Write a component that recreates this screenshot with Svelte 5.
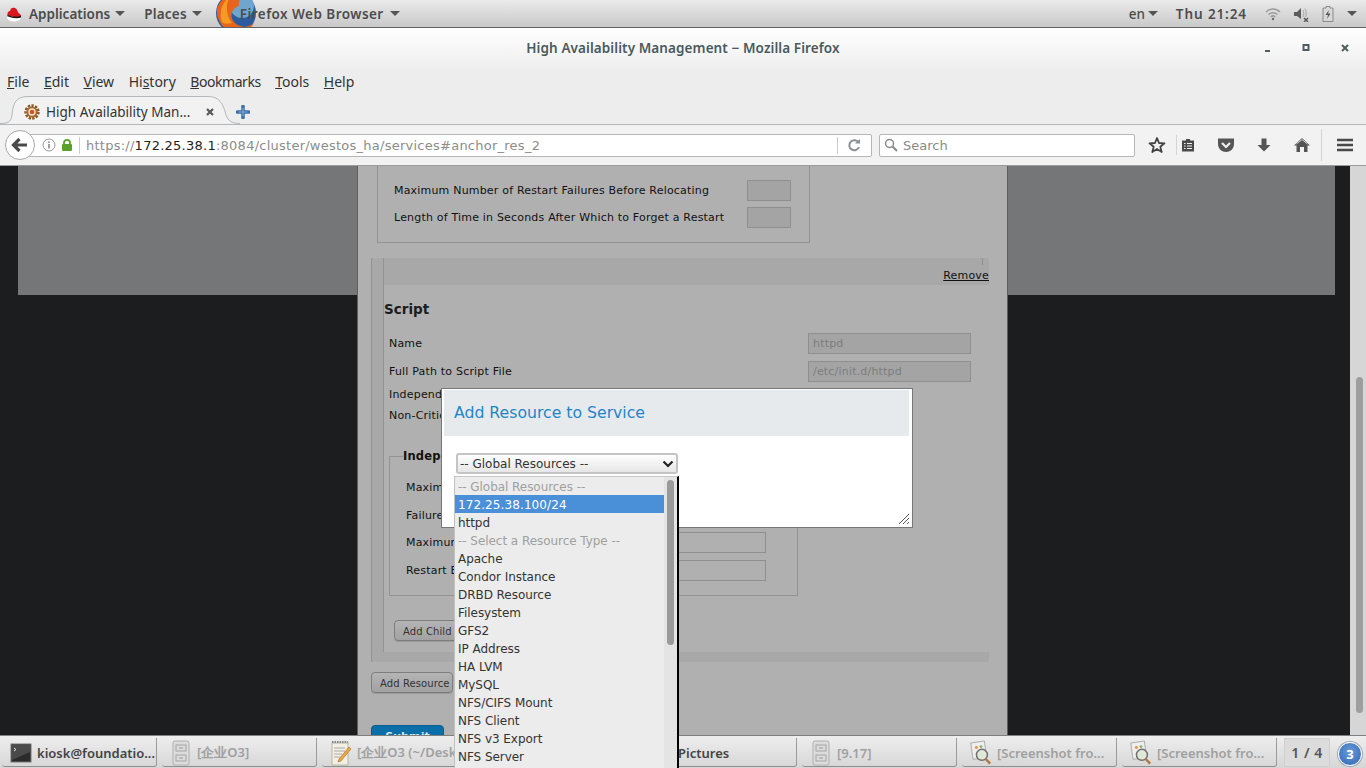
<script>
  const menus = [['','F','ile'],['','E','dit'],['','V','iew'],['Hi','s','tory'],['','B','ookmarks'],['','T','ools'],['','H','elp']];
  const options = [
    {t:'-- Global Resources --',d:true},{t:'172.25.38.100/24',s:true},{t:'httpd'},{t:'-- Select a Resource Type --',d:true},
    {t:'Apache'},{t:'Condor Instance'},{t:'DRBD Resource'},{t:'Filesystem'},{t:'GFS2'},{t:'IP Address'},{t:'HA LVM'},{t:'MySQL'},
    {t:'NFS/CIFS Mount'},{t:'NFS Client'},{t:'NFS v3 Export'},{t:'NFS Server'}
  ];
  const tasks = [
    {t:'kiosk@foundatio...',i:'term',a:true},{t:'[企业O3]',i:'cab'},{t:'[企业O3 (~/Desktop)',i:'note'},{t:'',i:''},
    {t:'Pictures',i:'',a:true,p:true},{t:'[9.17]',i:'cab'},{t:'[Screenshot fro...',i:'shot'},{t:'[Screenshot fro...',i:'shot'}
  ];
</script>

<div class="app">
  <header class="top">
    <svg class="rh" viewBox="0 0 16 16" width="16" height="16"><ellipse cx="8" cy="11" rx="7" ry="4.5" fill="#fff"/><path d="M1.5 9.5 C1 6 3 5 4 5 L5 2.5 C6.5 1.5 9 1.5 10.5 3 L12.5 7 C14 8 15.5 9 15 10.5 C13 12.5 9 11.5 6 10.5 C4 10 2.5 9.5 1.5 9.5Z" fill="#d8171e"/><path d="M1.5 9.5 C4 10.5 10 13 15 10.5" fill="none" stroke="#111" stroke-width="1.4"/></svg>
    <span class="tl app-l">Applications</span><i class="tri t1"></i>
    <span class="tl pl">Places</span><i class="tri t2"></i>
    <span class="ffwrap">
      <svg class="ff" viewBox="0 0 42 42" width="42" height="42"><circle cx="22" cy="21" r="20" fill="#2d5c9e"/><circle cx="28" cy="14" r="12" fill="#6fa6cf"/><path d="M3 17 C2 30 12 41 23 41 C31 41 37 37 40 31 C34 36 25 36 20 30 C15 24 18 16 25 14 C24 8 28 4 31 3 C22 -1 8 2 3 17Z" fill="#e8641b"/><path d="M8 30 C5 22 7 10 16 5 C12 11 11 22 18 31 C13 32 10 32 8 30Z" fill="#f59a23"/></svg>
      <span class="tl ffl">Firefox Web Browser</span>
    </span><i class="tri t3"></i>
    <span class="spacer"></span>
    <span class="tl en">en</span><i class="tri t4"></i>
    <span class="tl clock">Thu 21:24</span>
    <svg class="ic-wifi" viewBox="0 0 16 16" width="16" height="16" fill="none" stroke="#9c9c9c" stroke-width="1.5"><path d="M1 6 C5 2 11 2 15 6"/><path d="M3.5 8.5 C6 6 10 6 12.5 8.5"/><path d="M5.8 10.8 C7 9.8 9 9.8 10.2 10.8"/><circle cx="8" cy="13" r="1.2" fill="#6a6a6a" stroke="none"/></svg>
    <svg class="ic-vol" viewBox="0 0 16 16" width="16" height="16"><path d="M1 6 H4 L8 2 V13 L4 10 H1Z" fill="#5c5c5c"/><path d="M10 4 C11 6 11 9 10 11 M12 2.5 C13.5 5 13.5 9 12.5 11" fill="none" stroke="#aaa" stroke-width="1"/><path d="M11 12 L15 16 M15 12 L11 16" stroke="#555" stroke-width="1.4"/></svg>
    <svg class="ic-bat" viewBox="0 0 12 16" width="12" height="16"><path d="M4 .5 H8 V2 H11 V15.5 H1 V2 H4Z" fill="#d8d8d8" stroke="#8a8a8a"/><path d="M7 4 L3.5 9 H6 L5 13 L8.5 7.5 H6Z" fill="#555"/></svg>
    <i class="tri t5"></i>
  </header>

  <section class="win">
    <div class="title">
      <span class="title-t">High Availability Management − Mozilla Firefox</span>
      <div class="wbtns">
        <svg viewBox="0 0 10 10" width="10" height="10"><rect x="3" y="7" width="5" height="2" fill="#4f5d63"/></svg>
        <svg viewBox="0 0 10 10" width="10" height="10"><rect x="2.5" y="2" width="5" height="5" fill="none" stroke="#4f5d63" stroke-width="2"/></svg>
        <svg viewBox="0 0 10 10" width="10" height="10"><path d="M2 2 L8 8 M8 2 L2 8" stroke="#4f5d63" stroke-width="2"/></svg>
      </div>
    </div>
    <nav class="menu">
      {#each menus as m}<span>{m[0]}<u>{m[1]}</u>{m[2]}</span>{/each}
    </nav>
    <div class="tabs">
      <div class="tab">
        <svg class="tab-shape" viewBox="0 0 240 30" width="240" height="30"><path d="M0 28.5 C8 28.5 11 27 12 20 C13 8 16 1.5 28 1.5 H208 C219 1.5 223 8 226 20 C228 26 232 28.5 240 28.5" fill="#f2f2f2" stroke="#b4b8bb"/></svg>
        <svg class="fav" viewBox="0 0 16 16" width="16" height="16"><rect width="16" height="16" fill="#f7f5f1"/><circle cx="8" cy="8" r="6.4" fill="none" stroke="#8a5a2c" stroke-width="2.6" stroke-dasharray="2.4 1.2"/><circle cx="8" cy="8" r="4.6" fill="#f1e6d8" stroke="#a5672e" stroke-width="1.8"/><circle cx="8" cy="8" r="2.3" fill="#d8501c"/></svg>
        <span class="tab-t">High Availability Man...</span>
        <svg class="tab-x" viewBox="0 0 10 10" width="10" height="10"><path d="M2 2 L8 8 M8 2 L2 8" stroke="#55595c" stroke-width="2.2"/></svg>
      </div>
      <svg class="plus" viewBox="0 0 14 14" width="14" height="14"><path d="M7 1.5 V12.5 M1.5 7 H12.5" stroke="#3a6ea8" stroke-width="3.6" stroke-linecap="round"/><path d="M7 2.5 V11.5 M2.5 7 H11.5" stroke="#7ba7d6" stroke-width="1.2"/></svg>
    </div>
    <div class="nav">
      <div class="back"><svg viewBox="0 0 18 18" width="18" height="18"><path d="M8.5 3 L2.5 9 L8.5 15 M3 9 H16" fill="none" stroke="#4a4a4a" stroke-width="3.2"/></svg></div>
      <div class="url">
        <svg class="info" viewBox="0 0 14 14" width="14" height="14"><circle cx="7" cy="7" r="6" fill="none" stroke="#9a9a9a"/><rect x="6.2" y="6" width="1.6" height="4.5" fill="#8a8a8a"/><rect x="6.2" y="3.4" width="1.6" height="1.6" fill="#8a8a8a"/></svg>
        <svg class="lock" viewBox="0 0 12 14" width="12" height="14"><path d="M3 6 V4.5 C3 1 9 1 9 4.5 V6" fill="none" stroke="#5aa02c" stroke-width="1.8"/><rect x="1" y="6" width="10" height="7" rx="1" fill="#5aa02c"/></svg>
        <span class="vsep"></span>
        <span class="url-t">https://<b>172.25.38.1</b>:8084/cluster/westos_ha/services#anchor_res_2</span>
        <span class="vsep r"></span>
        <svg class="reload" viewBox="0 0 14 14" width="14" height="14"><path d="M11.5 4.5 A5 5 0 1 0 12 9" fill="none" stroke="#8a9096" stroke-width="2"/><path d="M8 5.5 H13 V1Z" fill="#8a9096"/></svg>
      </div>
      <div class="search">
        <svg viewBox="0 0 14 14" width="14" height="14"><circle cx="5.5" cy="5.5" r="4" fill="none" stroke="#8a8a8a" stroke-width="1.5"/><path d="M8.5 8.5 L13 13" stroke="#8a8a8a" stroke-width="2"/></svg>
        <span>Search</span>
      </div>
      <div class="tools">
        <svg class="i-star" viewBox="0 0 18 18" width="18" height="18"><path d="M9 2 L11 7 L16.5 7.3 L12.3 10.8 L13.7 16 L9 13.1 L4.3 16 L5.7 10.8 L1.5 7.3 L7 7Z" fill="none" stroke="#444" stroke-width="1.8" stroke-linejoin="round"/></svg>
        <span class="tsep a"></span>
        <svg class="i-clip" viewBox="0 0 16 16" width="16" height="16"><path d="M6 2 H10 V3.5 H14 V14.5 H2 V3.5 H6Z" fill="#4a4a4a"/><path d="M4 6.5 H5.5 M7 6.5 H12 M4 9 H5.5 M7 9 H12 M4 11.5 H5.5 M7 11.5 H12" stroke="#f2f2f2" stroke-width="1.2"/></svg>
        <svg class="i-pock" viewBox="0 0 18 16" width="18" height="16"><path d="M1 1.5 H17 V7 C17 12 13 15 9 15 C5 15 1 12 1 7Z" fill="#555"/><path d="M5 6 L9 10 L13 6" fill="none" stroke="#eee" stroke-width="2.2"/></svg>
        <svg class="i-down" viewBox="0 0 16 16" width="16" height="16"><path d="M5.5 1.5 H10.5 V8 H14.5 L8 14.5 L1.5 8 H5.5Z" fill="#555"/></svg>
        <svg class="i-home" viewBox="0 0 18 16" width="18" height="16"><path d="M9 1 L17 8.5 H14.5 V15 H11 V10 H7 V15 H3.5 V8.5 H1Z" fill="#555"/><path d="M3.5 7 L9 2.5 L14.5 7" fill="none" stroke="#f2f2f2" stroke-width=".8"/></svg>
        <span class="tsep b"></span>
        <svg class="i-menu" viewBox="0 0 16 14" width="16" height="14"><path d="M0 2 H16 M0 7 H16 M0 12 H16" stroke="#4a4a4a" stroke-width="2.4"/></svg>
      </div>
    </div>
  </section>

  <main class="content">
    <div class="view">
      <div class="band"></div>
      <div class="panel">
        <div class="restart">
          <div class="rrow"><span>Maximum Number of Restart Failures Before Relocating</span><span class="inp small"></span></div>
          <div class="rrow"><span>Length of Time in Seconds After Which to Forget a Restart</span><span class="inp small"></span></div>
        </div>
        <div class="res">
          <div class="res-in">
            <div class="res-head"><i class="tick"></i><a>Remove</a></div>
            <h3>Script</h3>
            <div class="frow one"><span>Name</span><span class="inp wide">httpd</span></div>
            <div class="frow two"><span>Full Path to Script File</span><span class="inp wide">/etc/init.d/httpd</span></div>
            <div class="lbl three">Independent Subtree</div>
            <div class="lbl four">Non-Critical Resource</div>
            <fieldset>
              <legend>Independent Subtree</legend>
              <div class="frow f1"><span>Maximum Number of Restarts</span></div>
              <div class="frow f2"><span>Failure Expire Time</span></div>
              <div class="frow f3"><span>Maximum Restarts</span><span class="inp fin"></span></div>
              <div class="frow f4"><span>Restart Expire Time</span><span class="inp fin"></span></div>
            </fieldset>
            <button class="child">Add Child Resource</button>
          </div>
        </div>
        <button class="addres">Add Resource</button>
        <button class="submit">Submit</button>
      </div>
    </div>
    <div class="scroll"><i></i></div>
  </main>

  <footer class="task">
    {#each tasks as t}
      <div class="tb" class:active={t.a}>
        {#if t.i==='term'}
          <svg viewBox="0 0 22 22" width="22" height="22"><rect x="1" y="2" width="20" height="18" fill="#2b2b2b" stroke="#777"/><path d="M2 3 H20 V10 L2 18Z" fill="#4a4a4a"/><path d="M4 6 L6 7.5 L4 9" fill="none" stroke="#ddd"/></svg>
        {:else if t.i==='cab'}
          <svg viewBox="0 0 22 26" width="22" height="26"><rect x="3" y="1" width="16" height="24" rx="2" fill="#dcdcdc" stroke="#b0b0b0"/><rect x="6" y="5" width="10" height="6" fill="none" stroke="#a4a4a4"/><rect x="6" y="15" width="10" height="6" fill="none" stroke="#a4a4a4"/><path d="M9 8 H13 M9 18 H13" stroke="#999"/></svg>
        {:else if t.i==='note'}
          <svg viewBox="0 0 22 26" width="22" height="26"><rect x="2" y="3" width="16" height="22" fill="#f3efe2" stroke="#b5b5a5"/><path d="M2 2 H18" stroke="#888" stroke-width="2" stroke-dasharray="1.5 1"/><path d="M4 8 H15 M4 11 H15 M4 14 H12 M4 17 H10" stroke="#aaa"/><path d="M19 7 L21 9 L11 21 L8 22 L9 19Z" fill="#e8a84a" stroke="#a86c2a" stroke-width=".6"/></svg>
        {:else if t.i==='shot'}
          <svg viewBox="0 0 24 26" width="22" height="26"><rect x="2" y="1" width="15" height="18" fill="#eee" stroke="#aaa" transform="rotate(-8 9 10)"/><circle cx="7" cy="7" r="1.8" fill="#e0a060"/><circle cx="12" cy="6" r="1.5" fill="#7fae6a"/><circle cx="13" cy="15" r="6" fill="#dfe9d8" stroke="#6d6d6d" stroke-width="1.6"/><path d="M17 19.5 L22 24.5" stroke="#b07a3c" stroke-width="2.6"/></svg>
        {/if}
        <span class:strong={t.a} class:pic={t.p}>{t.t}</span>
      </div>
    {/each}
    <div class="pager">1 / 4</div>
    <div class="badge">3</div>
  </footer>

  <div class="modal">
    <div class="m-head">Add Resource to Service</div>
    <div class="sel"><span>-- Global Resources --</span><svg viewBox="0 0 12 8" width="12" height="8"><path d="M1.5 1.5 L6 6 L10.5 1.5" fill="none" stroke="#222" stroke-width="2.2"/></svg></div>
    <svg class="grip" viewBox="0 0 10 10" width="10" height="10"><path d="M0 10 L10 0 M4 10 L10 4 M8 10 L10 8" stroke="#555"/></svg>
  </div>

  <div class="drop">
    <ul>
      {#each options as o}<li class:dis={o.d} class:sel-o={o.s}>{o.t}</li>{/each}
    </ul>
    <div class="d-track"><i></i></div>
  </div>
</div>

<style>
  :global(body){margin:0;overflow:hidden}
  .app{position:relative;width:1366px;height:768px;overflow:hidden;display:flex;flex-direction:column;font-family:"DejaVu Sans",sans-serif;background:#1c1d1e}

  .top{height:28px;box-sizing:border-box;flex:none;display:flex;align-items:center;background:linear-gradient(#eaeaea,#c9c9c9);border-bottom:1px solid #616161;font-family:"Noto Sans",sans-serif;position:relative;z-index:1}
  .rh{margin-left:6px;flex:none}
  .tl{font-size:13.5px;font-weight:600;color:#4c4c4c;white-space:nowrap}
  .app-l{margin-left:7px}
  .tri{display:block;width:0;height:0;border-left:5px solid transparent;border-right:5px solid transparent;border-top:5px solid #555;flex:none}
  .t1{margin-left:5px}
  .pl{margin-left:19px;letter-spacing:.2px}
  .t2{margin-left:5px}
  .ffwrap{position:relative;margin-left:12px;height:27px;display:flex;align-items:center;overflow:hidden;padding-left:26px}
  .ff{position:absolute;left:0;top:-8px}
  .ffl{position:relative;letter-spacing:.45px}
  .t3{margin-left:6px}
  .spacer{flex:1}
  .en{font-weight:500}
  .t4{margin-left:3px}
  .clock{margin-left:18px;margin-right:18px;letter-spacing:.9px}
  .ic-wifi{margin-right:12px}
  .ic-vol{margin-right:13px}
  .ic-bat{margin-right:13px}
  .t5{margin-right:9px}

  .win{flex:none;height:138px;background:#ededed;display:flex;flex-direction:column;font-family:"Noto Sans",sans-serif}
  .title{height:44px;flex:none;position:relative;display:flex;justify-content:center;padding-top:11px;box-sizing:border-box;background:linear-gradient(#fff,#ededed)}
  .title-t{font-size:13.5px;font-weight:600;color:#4a5a60;line-height:18px;letter-spacing:.09px}
  .wbtns{position:absolute;right:16px;top:15px;display:flex;gap:29px}
  .menu{height:23px;flex:none;display:flex;gap:14.5px;padding-left:7px;font-size:14px;color:#333;line-height:19px}
  .menu span:nth-child(5){letter-spacing:-.45px}
  .tabs{height:30px;flex:none;display:flex;align-items:center;border-bottom:1px solid #b4b8bb;box-sizing:border-box;position:relative}
  .tab{position:relative;width:240px;height:29px;display:flex;align-items:center;padding:4px 0 0 24px;box-sizing:border-box;flex:none}
  .tab-shape{position:absolute;left:0;top:0}
  .fav,.tab-t,.tab-x{position:relative}
  .tab-t{margin-left:6px;font-size:13.5px;color:#333;white-space:nowrap;width:159px}
  .plus{margin-left:-4px;margin-top:4px}
  .nav{height:41px;box-sizing:border-box;border-bottom:1px solid #9c9c9c;flex:none;background:#f2f2f2;display:flex;align-items:center;position:relative}
  .back{width:28px;height:28px;margin-left:5px;border:1px solid #a8a8a8;border-radius:50%;background:#fff;display:flex;align-items:center;justify-content:center;position:relative;z-index:1;flex:none;margin-right:-6px}
  .url{width:841px;height:21px;background:#fff;border:1px solid #b6b6b6;border-radius:0 2px 2px 0;display:flex;align-items:center;box-sizing:content-box;flex:none}
  .info{margin-left:12px}
  .lock{margin-left:5px}
  .vsep{width:1px;height:17px;background:#ccc;margin-left:6px;flex:none}
  .url-t{margin-left:6px;font-size:13px;color:#8c8c8c;letter-spacing:.25px;white-space:nowrap;font-family:"DejaVu Sans",sans-serif;width:751px;overflow:hidden}
  .url-t b{font-weight:400;color:#222}
  .vsep.r{margin-left:0}
  .reload{margin-left:9px}
  .search{width:256px;height:23px;margin-left:7px;background:#fff;border:1px solid #b6b6b6;border-radius:2px;display:flex;align-items:center;gap:5px;padding-left:4px;box-sizing:border-box;flex:none;font-size:13px;color:#8a8a8a;font-family:"DejaVu Sans",sans-serif}
  .tools{display:flex;align-items:center;margin-left:13px}
  .tsep{width:1px;background:#d4d4d4;height:20px}
  .tsep.a{margin-left:10px}
  .i-clip{margin-left:3px}
  .i-pock{margin-left:21px}
  .i-down{margin-left:21px}
  .i-home{margin-left:21px}
  .tsep.b{height:32px;margin-left:10px}
  .i-menu{margin-left:15px}

  .content{flex:none;height:569px;display:flex;background:#1c1d1e;position:relative}
  .view{width:1350px;height:569px;display:grid;overflow:hidden}
  .band{grid-area:1/1;margin-left:18px;width:1317px;height:129px;background:#757677}
  .panel{grid-area:1/1;margin-left:357px;width:651px;height:569px;box-sizing:border-box;background:#b0b0b0;border-left:1px solid #5e5e5e;border-right:1px solid #5e5e5e;font-size:11px;letter-spacing:.19px;color:#111;overflow:hidden}
  .restart{margin-left:19px;width:433px;height:77px;box-sizing:border-box;border:1px solid #939393;border-top:none;padding:14px 18px 0 16px}
  .rrow{display:flex;justify-content:space-between;align-items:center;height:21px;margin-bottom:6px}
  .inp{display:block;box-sizing:border-box;background:#a4a4a4;border:1px solid #8f8f8f;color:#7d7d7d;padding-left:4px;line-height:19px;font-size:11px}
  .small{width:44px;height:21px}
  .res{margin-top:15px;margin-left:13px;width:618px;height:404px;box-sizing:border-box;border-left:1px solid #939393;background:#a8a8a8;padding:0 0 10px 11px}
  .res-in{background:#b0b0b0;height:394px;border-left:1px solid #939393;box-sizing:border-box;position:relative}
  .res-head{height:27px;background:#a8a8a8;position:relative}
  .res-head a{position:absolute;right:0;bottom:3px;text-decoration:underline;color:#111;font-size:11px}
  .tick{position:absolute;right:6px;top:0;width:1px;height:7px;background:#8f8f8f}
  h3{margin:16px 0 0;font-size:13.5px;line-height:17px;font-weight:700;color:#1c1c1c;letter-spacing:0}
  .frow{display:flex;justify-content:space-between;align-items:center;margin-left:5px;line-height:14px}
  .one{height:21px;margin-top:15px;width:582px}
  .two{height:21px;margin-top:7px;width:582px}
  .wide{width:163px;height:21px}
  .lbl{margin-left:5px;line-height:14px}
  .three{margin-top:6px}
  .four{margin-top:7px}
  fieldset{margin:26px 0 0 5px;padding:0;width:409px;height:147px;box-sizing:border-box;border:1px solid #939393;position:relative}
  legend{margin-left:13px;padding:0;font-weight:700;font-size:11.5px;line-height:14px;color:#111}
  .f1,.f2,.f3,.f4{margin-left:16px;width:360px;height:21px}
  .f1{margin-top:14px}
  .f2{margin-top:7px}
  .f3{margin-top:6px}
  .f4{margin-top:7px}
  .fin{width:160px;height:21px;background:transparent}
  button{display:block;font-family:inherit;font-size:10px;letter-spacing:.1px;border:1px solid #7d7d7d;border-radius:4px;background:linear-gradient(#b4b4b4,#a2a2a2);color:#333;padding:0;height:21px;box-shadow:0 1px 0 #999}
  .child{margin:24px 0 0 10px;width:120px;text-align:left;padding:1px 0 0 8px}
  .addres{margin:10px 0 0 13px;width:82px;text-align:left;padding:1px 0 0 8px}
  .submit{margin:32px 0 0 13px;width:73px;height:30px;background:#0a6ea8;border-color:#0a5f92;color:#dfe8ee;font-size:11px;font-weight:700;padding-bottom:8px;box-shadow:none}
  .scroll{width:16px;height:569px;background:#d6d6d6;position:relative;flex:none}
  .scroll i{display:block;margin:211px 0 0 6px;width:7px;height:336px;background:#9e9e9e;border-radius:4px}

  .task{flex:none;height:33px;box-sizing:border-box;border-top:1px solid #7f7f7f;background:linear-gradient(#eeeeee,#d6d6d6);display:flex;align-items:stretch;padding:2px 0 1px 2px;gap:5px;position:relative;z-index:2;font-family:"Noto Sans",sans-serif}
  .tb{width:155px;box-sizing:border-box;border-right:1px solid #9a9a9a;border-bottom:1px solid #8e8e8e;border-radius:0 0 3px 3px;display:flex;align-items:center;gap:5px;padding:1px 0 0 8px;font-size:13px;color:#a0a0a0;white-space:nowrap;overflow:hidden;flex:none}
  .tb svg{flex:none}
  .tb span{font-weight:600;letter-spacing:0}
  .tb .strong{color:#444}
  .tb .pic{padding-left:28px}
  .pager{width:46px;margin-left:2px;background:#dcdcdc;border:1px solid #cfcfcf;box-sizing:border-box;display:flex;align-items:center;justify-content:center;font-size:14px;font-weight:600;letter-spacing:.5px;color:#555;flex:none}
  .badge{position:absolute;left:1338px;top:6px;width:22px;height:22px;border-radius:50%;background:radial-gradient(circle at 50% 40%,#6a9bd8,#2d66b2);border:1px solid #fff;box-shadow:0 0 0 1px #9ba7b6;color:#fff;font-size:13px;font-weight:700;text-align:center;line-height:22px}

  .modal{position:absolute;left:441px;top:388px;width:472px;height:140px;box-sizing:border-box;background:#fff;border:1px solid #777;padding:1px 3px 2px 2px;z-index:3}
  .m-head{height:46px;background:#e7eaed;color:#1e86c8;font-size:15.7px;line-height:46px;padding-left:10px;font-family:"DejaVu Sans",sans-serif}
  .sel{margin:17px 0 0 12px;width:222px;height:21px;box-sizing:border-box;border:2px solid #c4c4c4;border-radius:3px;background:linear-gradient(#fff,#e6e6e6);display:flex;justify-content:space-between;align-items:center;padding:1px 2px 0 2px;font-size:12px;color:#333}
  .grip{position:absolute;right:3px;bottom:3px}

  .drop{position:absolute;left:454px;top:476px;width:225px;height:292px;box-sizing:border-box;background:#ececec;border-left:1px solid #c0c0c0;border-right:2px solid #000;border-top:1px solid #c8c8c8;display:flex;z-index:4;overflow:hidden}
  ul{list-style:none;margin:0;padding:0;width:209px;flex:none;font-size:12px;color:#333}
  li{height:18px;line-height:20px;padding-left:3px;white-space:nowrap;letter-spacing:-.05px}
  li.dis{color:#a0a0a0}
  li.sel-o{background:#4a90d9;color:#fff;letter-spacing:.1px}
  .d-track{flex:1;background:#e4e4e4}
  .d-track i{display:block;margin:3px 0 0 3px;width:7px;height:165px;border-radius:4px;background:#9a9a9a}
</style>
